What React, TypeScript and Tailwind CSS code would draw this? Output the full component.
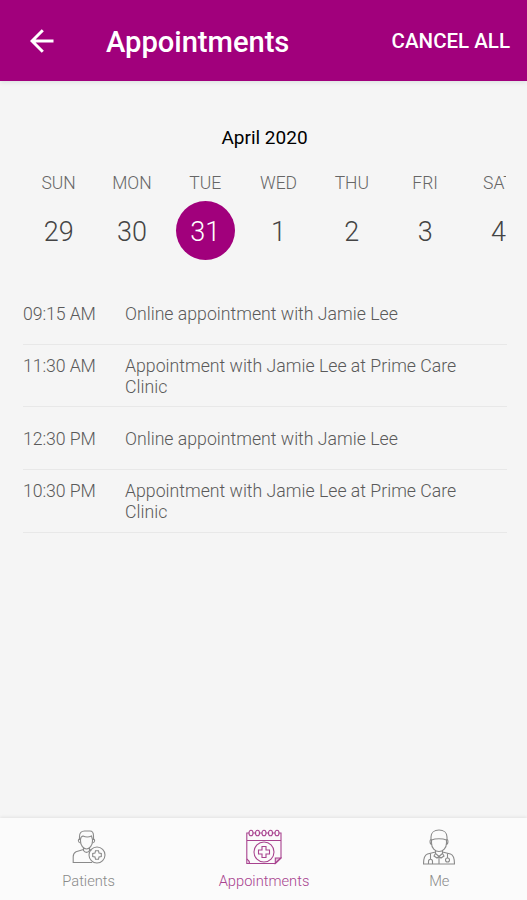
import type { ReactNode } from 'react'
import { clsx } from 'clsx'

const DAYS = [
  { name: 'SUN', date: 29 },
  { name: 'MON', date: 30 },
  { name: 'TUE', date: 31, selected: true },
  { name: 'WED', date: 1 },
  { name: 'THU', date: 2 },
  { name: 'FRI', date: 3 },
  { name: 'SAT', date: 4 },
]

const APPOINTMENTS = [
  { time: '09:15 AM', title: 'Online appointment with Jamie Lee' },
  { time: '11:30 AM', title: 'Appointment with Jamie Lee at Prime Care Clinic' },
  { time: '12:30 PM', title: 'Online appointment with Jamie Lee' },
  { time: '10:30 PM', title: 'Appointment with Jamie Lee at Prime Care Clinic' },
]

function BackIcon() {
  return (
    <svg className="h-6 w-6" viewBox="0 0 24 24" fill="none" stroke="currentColor" strokeWidth="3">
      <path d="M23.5 12H2.500M12.800 1.200 2 12l10.800 10.800" />
    </svg>
  )
}

function PatientsIcon() {
  return (
    <svg className="h-9 w-9" viewBox="0 0 36 36" fill="none" stroke="currentColor" strokeWidth="1.1">
      <path d="M8.500 11V7.500c0-3.500 2-5.500 5-5.500H19c2 0 3.500 2 3.500 5V11" />
      <path d="M9.500 10.500C9.500 8.500 10.500 7.500 12 7c3 1.500 6.500 1 8.500 0l1 3.500V12c0 4.500-3 8-6 8s-6-3.500-6-8z" />
      <path d="M8.500 10c-1.700 0-1.500 4 1.200 4M22.500 10c1.700 0 1.500 4-1.200 4" />
      <path d="M12.500 19v2.500c1.500 2.500 4.500 2.500 6 0V19" />
      <path d="M12.500 20.500 5 22.700c-2 1-2.800 3-2.800 5V33.500h19M18.500 20.500l2 .700" />
      <circle cx="26" cy="26" r="8" />
      <path d="M24.500 21.700h3l.5 2.300 2.300.500v3l-2.300.5-.5 2.300h-3L24 28l-2.300-.5v-3L24 24z" />
    </svg>
  )
}

function AppointmentsIcon() {
  return (
    <svg className="h-9 w-9" viewBox="0 0 36 36" fill="none" stroke="currentColor" strokeWidth="1.100">
      <path d="M3 4H.800v30.500h28.500L35 29V4h-2M7 4h2.500M13.500 4H16M20 4h2.500M26.500 4H29M.800 11.500H35" />
      <path d="M29.300 34.500V29H35z" fill="currentColor" fillOpacity="0.300" />
      <path d="M3.500 34.500c0-2-1-3.500-2.700-4.500" />
      {[5, 11.5, 18, 24.500, 31].map((x) => (
        <ellipse key={x} cx={x} cy="4" rx="2" ry="2.800" />
      ))}
      <circle cx="18" cy="23" r="10" />
      <path d="M16 17.500h4V21h3.500v4H20v3.500h-4V25h-3.500v-4H16z" />
    </svg>
  )
}

function DoctorIcon() {
  return (
    <svg className="h-9 w-9" viewBox="0 0 36 36" fill="none" stroke="currentColor" strokeWidth="1.100">
      <path d="M10 11V8c0-4.500 3.500-7 8-7s8 2.500 8 7v3" />
      <path d="M10.500 11c4-1.700 11-1.700 15 0v3c0 5-3.500 8.500-7.500 8.500S10.500 19 10.500 14z" />
      <path d="M10.500 10.500c-2-.5-2 5 .500 5M25.500 10.500c2-.5 2 5-.500 5" />
      <path d="M14.500 21.500v3l3.500 3 3.500-3v-3M14.500 23 6.500 25c-3 1-4 5-4 10h31c0-5-1-9-4-10l-8-2" />
      <path d="M18 27.500V35M14.500 24.500 13 27l3 2 2-1.500 2 1.500 3-2-1.500-2.500" />
      <path d="M9.500 24.500V30M7.500 35v-2.500c0-3 4-3 4 0V35M26.500 24.500V29" />
      <circle cx="26.500" cy="31" r="2" />
    </svg>
  )
}

function NavItem({ label, active, children }: { label: string; active?: boolean; children: ReactNode }) {
  return (
    <button
      className={clsx(
        'flex w-44 flex-col items-center pt-[11px] text-[14.700px] leading-5',
        active ? 'text-[#a8438f]' : 'text-[#8a8a8a]'
      )}
    >
      {children}
      <span className="mt-[6px] font-light">{label}</span>
    </button>
  )
}

export default function App() {
  return (
    <div className="flex h-screen w-full flex-col overflow-hidden bg-[#f5f5f5] font-['Roboto',sans-serif]">
      <header className="flex h-[81px] shrink-0 items-center bg-[#a1007c] pr-[17px] pl-[30px] text-white shadow-[0_1px_5px_rgba(0,60,50,0.12)]">
        <BackIcon />
        <h1 className="ml-[52px] pt-1 text-[29.200px] font-medium tracking-[-0.050px]">Appointments</h1>
        <button className="ml-auto pt-[2px] text-[20.500px] font-medium">CANCEL ALL</button>
      </header>

      <main className="flex-1 pr-5 pl-[22px]">
        <h2 className="mt-[45px] text-center text-[19px] leading-6 text-black">April 2020</h2>

        <div className="mt-[21px] mr-px flex overflow-hidden">
          {DAYS.map((day) => (
            <div key={day.name} className="flex w-[73.300px] shrink-0 flex-col items-center">
              <span className="text-[17.500px] leading-6 font-light text-[#666]">{day.name}</span>
              <span
                className={clsx(
                  'mt-[6px] flex h-[59px] w-[59px] items-center justify-center rounded-full pt-[3px] text-[27px] font-light',
                  day.selected ? 'bg-[#a1007c] text-white' : 'text-[#444]'
                )}
              >
                {day.date}
              </span>
            </div>
          ))}
        </div>

        <ul className="mt-[22px] ml-px">
          {APPOINTMENTS.map((item) => (
            <li
              key={item.time}
              className="flex h-[62.700px] items-center border-b border-[#e8e8e8] pt-[2px] text-[17.700px] leading-[20.500px] font-light text-[#5a5a5a]"
            >
              <div className="flex">
                <span className="w-[102px] shrink-0 tracking-[-0.100px]">{item.time}</span>
                <span className="w-[350px]">{item.title}</span>
              </div>
            </li>
          ))}
        </ul>
      </main>

      <nav className="flex h-[82px] shrink-0 justify-center bg-[#fbfbfb] pl-px shadow-[0_-1px_3px_rgba(0,0,0,0.08)]">
        <NavItem label="Patients">
          <PatientsIcon />
        </NavItem>
        <NavItem label="Appointments" active>
          <AppointmentsIcon />
        </NavItem>
        <NavItem label="Me">
          <DoctorIcon />
        </NavItem>
      </nav>
    </div>
  )
}
